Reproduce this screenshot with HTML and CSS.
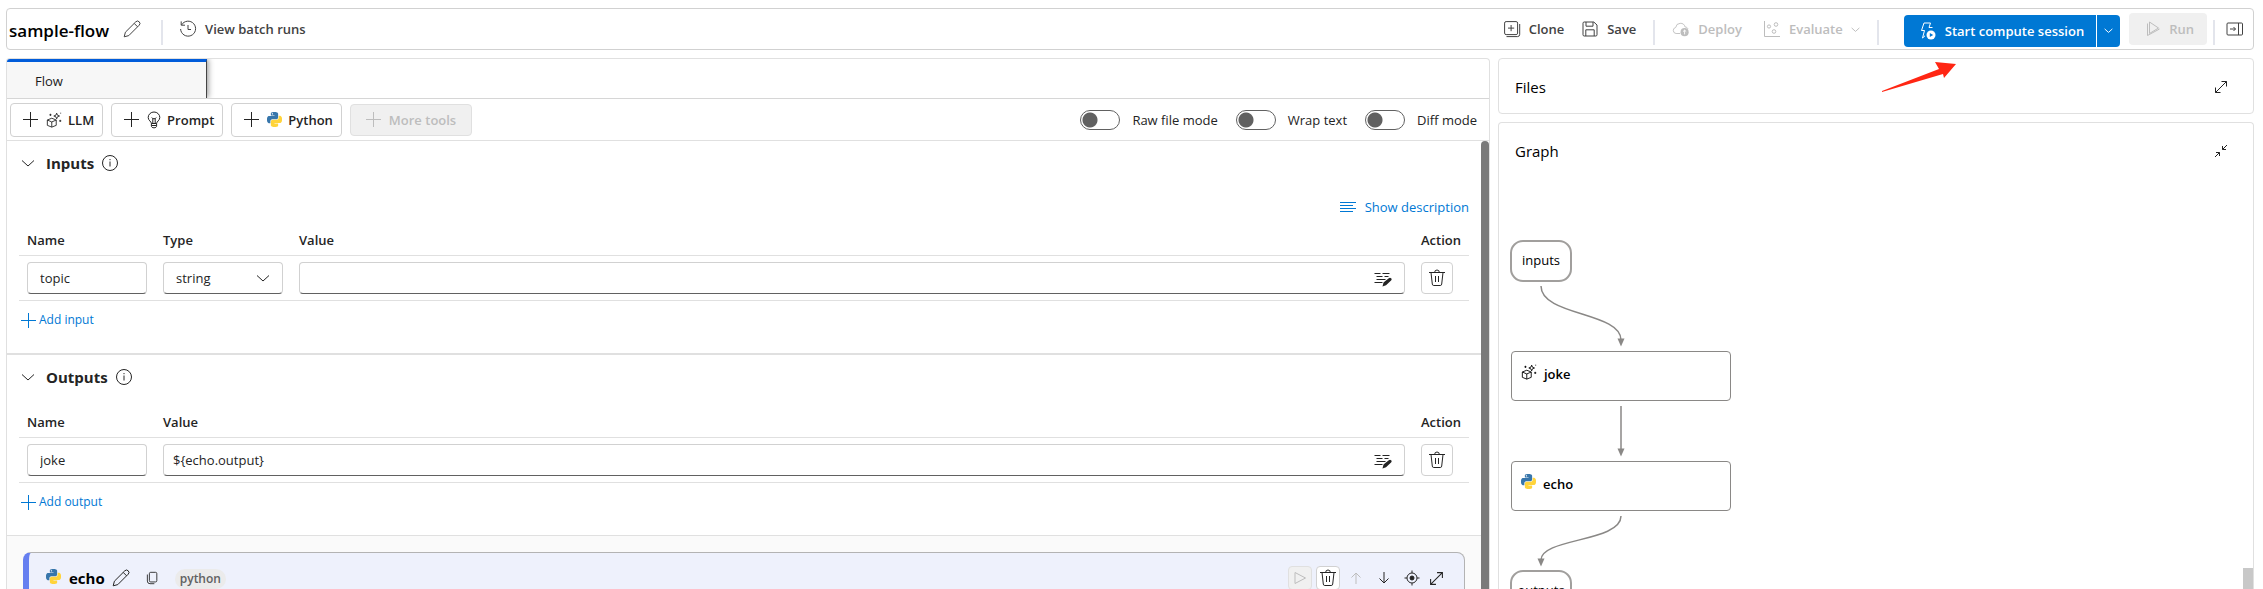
FILE: index.html
```html
<!DOCTYPE html>
<html lang="en">
<head>
<meta charset="utf-8">
<title>sample-flow</title>
<link rel="stylesheet" href="styles.css">
</head>
<body>
<svg class="sprite" aria-hidden="true">
  <symbol id="i-pencil" viewBox="0 0 18 18"><path d="M1.200 16.800l1.200-4.600L12.800 1.800a2.400 2.400 0 0 1 3.400 3.400L5.800 15.600zM11.200 3.400l3.400 3.400"/></symbol>
  <symbol id="i-history" viewBox="0 0 18 18"><path d="M2.600 4.900A7.500 7.500 0 1 1 1.600 9M2.200 1.400v3.800H6M9 5v4.500h3"/></symbol>
  <symbol id="i-clone" viewBox="0 0 18 18"><rect x="1.600" y="1.600" width="13" height="13" rx="1.500"/><path d="M8.100 5v6.200M5 8.100h6.200M3.500 16.600h11a2.200 2.200 0 0 0 2.200-2.200V4"/></symbol>
  <symbol id="i-save" viewBox="0 0 18 18"><path d="M2 3.200A1.200 1.200 0 0 1 3.200 2h9.600L16 5v9.800a1.200 1.200 0 0 1-1.200 1.200H3.200A1.200 1.200 0 0 1 2 14.800zM5 2v4.200h7V2M4.800 16V9.800h8.400V16"/></symbol>
  <symbol id="i-deploy" viewBox="0 0 20 18"><path d="M9 14H4.500a3.400 3.400 0 0 1-.4-6.700 5.300 5.300 0 0 1 10.400-.6M14.500 6.700c1.500.1 2.700.9 3.200 2"/><circle cx="14" cy="12.500" r="4.500" fill="currentColor" stroke="none"/><path d="M14 15v-4.800M12.200 12L14 10.200l1.800 1.800" stroke="#fff"/></symbol>
  <symbol id="i-evaluate" viewBox="0 0 18 18"><path d="M1.500 1v15.500H17"/><circle cx="6" cy="6.500" r="1.600"/><circle cx="13" cy="4.500" r="1.800"/><circle cx="11" cy="11.500" r="1.800"/></symbol>
  <symbol id="i-chevron" viewBox="0 0 14 14"><path d="M1 4.500l6 5.500 6-5.500"/></symbol>
  <symbol id="i-session" viewBox="0 0 18 18"><path d="M5 1h6.500L10 5.500h3.500M5 1L2.500 8.500h3L3.500 16l2.500-2.200"/><circle cx="12" cy="13" r="4.500" fill="currentColor" stroke="none"/><path d="M10.800 10.900l3.400 2.100-3.400 2.100z" fill="#0078d4" stroke="none"/></symbol>
  <symbol id="i-run" viewBox="0 0 16 16"><path d="M4.500 1v11.500L13.500 7zM2.500 2.500V14.500L14.500 8"/></symbol>
  <symbol id="i-panel" viewBox="0 0 18 14"><rect x="1" y="1" width="15.500" height="12" rx="1"/><path d="M12.500 1v12M4 7h5.500M7.500 5l2 2-2 2"/></symbol>
  <symbol id="i-plus" viewBox="0 0 15 15"><path d="M7.500 0v15M0 7.500h15"/></symbol>
  <symbol id="i-llm" viewBox="0 0 18 18"><path d="M1.500 9l5-2 5 2v6l-5 2-5-2zM1.500 9l5 2.200 5-2.200M6.500 11.200V17M12 1.300l.9 2.300 2.300.9-2.300.9-.9 2.300-.9-2.300-2.300-.9 2.300-.9zM5 2v2.400M3.800 3.200h2.400M16 8.800v2.400M14.800 10h2.400M16.500.8v1"/></symbol>
  <symbol id="i-bulb" viewBox="0 0 14 18"><path d="M4.400 12.500C4.400 10.500 1.200 9.500 1.200 6.500a5.800 5.500 0 0 1 11.600 0c0 3-3.200 4-3.200 6zM4.400 12.500v2.300c0 1.400 1 2 2.600 2s2.600-.6 2.600-2v-2.300M4.400 14.500h5.200M5.800 12V7.500M8.200 12V7.500M4.800 6.500l1 1.200h2.400l1-1.200"/></symbol>
  <symbol id="i-python" viewBox="0 0 24 24"><path fill="#3776ab" stroke="none" d="M14.250.18l.9.2.73.26.59.3.45.32.34.34.25.34.16.33.1.3.04.26.02.2-.01.13V8.5l-.05.63-.13.55-.21.46-.26.38-.3.31-.33.25-.35.19-.35.14-.33.1-.3.07-.26.04-.21.02H8.77l-.69.05-.59.14-.5.22-.41.27-.33.32-.27.35-.2.36-.15.37-.1.35-.07.32-.04.27-.02.21v3.06H3.17l-.21-.03-.28-.07-.32-.12-.35-.18-.36-.26-.36-.36-.35-.46-.32-.59-.28-.73-.21-.88-.14-1.05-.05-1.23.06-1.22.16-1.04.24-.87.32-.71.36-.57.4-.44.42-.33.42-.24.4-.16.36-.1.32-.05.24-.01h.16l.06.01h8.16v-.83H6.18l-.01-2.75-.02-.37.05-.34.11-.31.17-.28.25-.26.31-.23.38-.2.44-.18.51-.15.58-.12.64-.1.71-.06.77-.04.84-.02 1.27.05zm-6.3 1.98l-.23.33-.08.41.08.41.23.34.33.22.41.09.41-.09.33-.22.23-.34.08-.41-.08-.41-.23-.33-.33-.22-.41-.09-.41.09z"/><path fill="#ffd43b" stroke="none" d="M21.04 6.11l.28.06.32.12.35.18.36.27.36.35.35.47.32.59.28.73.21.88.14 1.04.05 1.23-.06 1.23-.16 1.04-.24.86-.32.71-.36.57-.4.45-.42.33-.42.24-.4.16-.36.09-.32.05-.24.02-.16-.01h-8.22v.82h5.84l.01 2.76.02.36-.05.34-.11.31-.17.29-.25.25-.31.24-.38.2-.44.17-.51.15-.58.13-.64.09-.71.07-.77.04-.84.01-1.27-.04-1.07-.14-.9-.2-.73-.25-.59-.3-.45-.33-.34-.34-.25-.34-.16-.33-.1-.3-.04-.25-.02-.2.01-.13v-5.34l.05-.64.13-.54.21-.46.26-.38.3-.32.33-.24.35-.2.35-.14.33-.1.3-.06.26-.04.21-.02.13-.01h5.84l.69-.05.59-.14.5-.21.41-.28.33-.32.27-.35.2-.36.15-.36.1-.35.07-.32.04-.28.02-.21V6.07z"/></symbol>
  <symbol id="i-info" viewBox="0 0 18 18"><circle cx="9" cy="9" r="7.500"/><path d="M9 7.500v5M9 5v1.200"/></symbol>
  <symbol id="i-lines" viewBox="0 0 16 12"><path d="M0 1.500h16M0 4.500h13M0 7.500h16M0 10.500h13"/></symbol>
  <symbol id="i-edit" viewBox="0 0 18 16"><path d="M.5 2.500h6M8.500 2.500h7M2.500 5.500h6M10.500 5.500h4M2.500 8.500h9M.5 11.500h8"/><path d="M8.500 15.500l1-4L14.800 7.200a1.600 1.600 0 0 1 2.300 2.300L12 14.300z" fill="currentColor" stroke="none"/></symbol>
  <symbol id="i-trash" viewBox="0 0 18 18"><path d="M1 3.500h16M6.700 3.300a2.300 2.300 0 0 1 4.600 0M3 3.500l1.300 11.600a1.500 1.500 0 0 0 1.500 1.400h6.400a1.500 1.500 0 0 0 1.500-1.400L15 3.500M7.500 7v6M10.500 7v6"/></symbol>
  <symbol id="i-copy" viewBox="0 0 16 16"><rect x="5" y="1.500" width="8.500" height="11" rx="1.500"/><path d="M2.700 4v7.500a3 3 0 0 0 3 3h5"/></symbol>
  <symbol id="i-play" viewBox="0 0 14 14"><path d="M2 1.500v11L12.500 7z"/></symbol>
  <symbol id="i-up" viewBox="0 0 14 14"><path d="M7 13V2M2.500 6.500L7 2l4.500 4.500"/></symbol>
  <symbol id="i-down" viewBox="0 0 14 14"><path d="M7 1v11M2.500 7.500L7 12l4.500-4.500"/></symbol>
  <symbol id="i-target" viewBox="0 0 16 16"><circle cx="8" cy="8" r="5"/><circle cx="8" cy="8" r="2" fill="currentColor"/><path d="M8 .5V3M8 13v2.500M.5 8H3M13 8h2.500"/></symbol>
  <symbol id="i-expand" viewBox="0 0 14 14"><path d="M1.500 12.500l11-11M7.500 1.500h5v5M1.500 7.500v5h5"/></symbol>
  <symbol id="i-collapse" viewBox="0 0 14 14"><path d="M13 1L8.500 5.500M8.500 2v3.500H12M1 13l4.500-4.500M2 8.500h3.500V12"/></symbol>
</svg>

<div class="app">
  <header class="topbar">
    <h1 class="title">sample-flow</h1>
    <button class="cmd cmd-edit" aria-label="Rename flow"><svg class="icon-18"><use href="#i-pencil"/></svg></button>
    <span class="divider"></span>
    <button class="cmd cmd-history"><svg class="icon-18"><use href="#i-history"/></svg>View batch runs</button>
    <div class="actions">
      <button class="cmd"><svg class="icon-18"><use href="#i-clone"/></svg>Clone</button>
      <button class="cmd"><svg class="icon-18"><use href="#i-save"/></svg>Save</button>
      <span class="divider"></span>
      <button class="cmd" disabled><svg class="icon-18"><use href="#i-deploy"/></svg>Deploy</button>
      <button class="cmd cmd-evaluate" disabled><svg class="icon-18"><use href="#i-evaluate"/></svg>Evaluate<svg class="icon-9"><use href="#i-chevron"/></svg></button>
      <span class="divider"></span>
      <div class="session">
        <button class="session-main"><svg class="icon-18"><use href="#i-session"/></svg>Start compute session</button>
        <button class="session-more" aria-label="More session options"><svg class="icon-9"><use href="#i-chevron"/></svg></button>
        <svg class="pointer" viewBox="0 0 74 32"><path d="M0 30l57-22-4-7 21 2-12 14-1-4L0 31z"/></svg>
      </div>
      <button class="run" disabled><svg class="icon-16"><use href="#i-run"/></svg>Run</button>
      <span class="divider divider-last"></span>
      <button class="cmd cmd-panel" aria-label="Toggle side panel"><svg class="icon-panel"><use href="#i-panel"/></svg></button>
    </div>
  </header>

  <div class="columns">
    <main class="editor">
      <div class="tabs" role="tablist"><button class="tab" role="tab" aria-selected="true">Flow</button></div>
      <div class="toolbar">
        <button class="tool"><svg class="icon-15"><use href="#i-plus"/></svg><svg class="icon-16"><use href="#i-llm"/></svg>LLM</button>
        <button class="tool"><svg class="icon-15"><use href="#i-plus"/></svg><svg class="icon-bulb"><use href="#i-bulb"/></svg>Prompt</button>
        <button class="tool"><svg class="icon-15"><use href="#i-plus"/></svg><svg class="icon-15"><use href="#i-python"/></svg>Python</button>
        <button class="tool" disabled><svg class="icon-15"><use href="#i-plus"/></svg>More tools</button>
        <div class="switches">
          <label class="switch"><input type="checkbox" role="switch">Raw file mode</label>
          <label class="switch"><input type="checkbox" role="switch">Wrap text</label>
          <label class="switch"><input type="checkbox" role="switch">Diff mode</label>
        </div>
      </div>

      <div class="scroller">
        <div class="content">
          <section class="section">
            <h2 class="heading"><svg class="icon-14"><use href="#i-chevron"/></svg>Inputs<svg class="icon-18"><use href="#i-info"/></svg></h2>
            <div class="describe"><button class="link"><svg class="icon-lines"><use href="#i-lines"/></svg>Show description</button></div>
            <table class="grid">
              <thead><tr><th class="col-name">Name</th><th class="col-name">Type</th><th>Value</th><th class="col-action">Action</th></tr></thead>
              <tbody><tr>
                <td><input class="field" type="text" value="topic" aria-label="Input name"></td>
                <td><div class="overlay"><select class="field" aria-label="Input type"><option>string</option></select><svg class="icon-14"><use href="#i-chevron"/></svg></div></td>
                <td><div class="overlay"><input class="field field-value" type="text" aria-label="Input value"><svg class="icon-edit"><use href="#i-edit"/></svg></div></td>
                <td><button class="delete" aria-label="Delete input"><svg class="icon-18"><use href="#i-trash"/></svg></button></td>
              </tr></tbody>
            </table>
            <button class="link link-add"><svg class="icon-15"><use href="#i-plus"/></svg>Add input</button>
          </section>

          <section class="section section-outputs">
            <h2 class="heading"><svg class="icon-14"><use href="#i-chevron"/></svg>Outputs<svg class="icon-18"><use href="#i-info"/></svg></h2>
            <table class="grid grid-outputs">
              <thead><tr><th class="col-name">Name</th><th>Value</th><th class="col-action">Action</th></tr></thead>
              <tbody><tr>
                <td><input class="field" type="text" value="joke" aria-label="Output name"></td>
                <td><div class="overlay"><input class="field field-value" type="text" value="${echo.output}" aria-label="Output value"><svg class="icon-edit"><use href="#i-edit"/></svg></div></td>
                <td><button class="delete" aria-label="Delete output"><svg class="icon-18"><use href="#i-trash"/></svg></button></td>
              </tr></tbody>
            </table>
            <button class="link link-add"><svg class="icon-15"><use href="#i-plus"/></svg>Add output</button>
          </section>

          <div class="nodes">
            <article class="node">
              <svg class="icon-15"><use href="#i-python"/></svg>
              <h3 class="node-name">echo</h3>
              <button class="mini" aria-label="Rename node"><svg class="icon-18"><use href="#i-pencil"/></svg></button>
              <button class="mini mini-copy" aria-label="Copy node name"><svg class="icon-14"><use href="#i-copy"/></svg></button>
              <span class="pill">python</span>
              <div class="node-actions">
                <button class="mini mini-boxed" disabled aria-label="Run node"><svg class="icon-14"><use href="#i-play"/></svg></button>
                <button class="mini mini-boxed" aria-label="Delete node"><svg class="icon-18"><use href="#i-trash"/></svg></button>
                <button class="mini" disabled aria-label="Move up"><svg class="icon-14"><use href="#i-up"/></svg></button>
                <button class="mini" aria-label="Move down"><svg class="icon-14"><use href="#i-down"/></svg></button>
                <button class="mini" aria-label="Locate in graph"><svg class="icon-16"><use href="#i-target"/></svg></button>
                <button class="mini mini-expand" aria-label="Expand node"><svg class="icon-15"><use href="#i-expand"/></svg></button>
              </div>
            </article>
          </div>
        </div>
        <div class="scrollbar"></div>
      </div>
    </main>

    <aside class="side">
      <section class="card card-files"><h2 class="card-title">Files</h2><button class="mini" aria-label="Expand files"><svg class="icon-14"><use href="#i-expand"/></svg></button></section>
      <section class="card card-graph">
        <div class="card-head"><h2 class="card-title">Graph</h2><button class="mini" aria-label="Collapse graph"><svg class="icon-14"><use href="#i-collapse"/></svg></button></div>
        <div class="canvas">
          <svg class="edges" viewBox="0 0 300 420">
            <path d="M42 105C42 135 122 131 122 159M122 225v44M122 335C122 361 42 357 42 379"/>
            <path class="tip" d="M118.500 157.500h7l-3.500 8zM118.500 267.500h7l-3.500 8zM38.500 377.500h7l-3.500 8z"/>
          </svg>
          <div class="port port-inputs">inputs</div>
          <div class="box box-joke"><svg class="icon-16"><use href="#i-llm"/></svg>joke</div>
          <div class="box box-echo"><svg class="icon-15"><use href="#i-python"/></svg>echo</div>
          <div class="port port-outputs">outputs</div>
        </div>
        <div class="thumb"></div>
      </section>
    </aside>
  </div>
</div>
</body>
</html>
```

FILE: styles.css
```css
* { box-sizing: border-box; }

body {
  margin: 0;
  background: #fff;
  color: #242424;
  font: 13px/20px "Open Sans", "Noto Sans", sans-serif;
  overflow: hidden;
}

h1, h2, h3 { margin: 0; }

button, input, select { font: inherit; color: inherit; }

button {
  display: flex;
  align-items: center;
  padding: 0;
  border: 0;
  background: none;
  white-space: nowrap;
}

svg { flex: none; fill: none; stroke: currentColor; stroke-width: 1; }

.sprite { position: absolute; width: 0; height: 0; }
.icon-9 { width: 9px; height: 9px; stroke-width: 1.5; }
.icon-14 { width: 14px; height: 14px; }
.icon-15 { width: 15px; height: 15px; }
.icon-16 { width: 16px; height: 16px; }
.icon-18 { width: 18px; height: 18px; }
.icon-bulb { width: 14px; height: 18px; }
.icon-panel { width: 18px; height: 14px; }
.icon-lines { width: 16px; height: 12px; }
.icon-edit { width: 18px; height: 16px; }

.app {
  display: flex;
  flex-direction: column;
  gap: 8px;
  height: 100vh;
  padding: 8px 9px 0 6px;
  overflow: hidden;
}

/* Top bar */
.topbar {
  display: flex;
  align-items: center;
  height: 42px;
  padding: 0 9px 0 2px;
  border: 1px solid #d1d1d1;
  border-radius: 4px;
}
.title { padding-top: 4px; color: #000; font-size: 17px; line-height: 24px; font-weight: 600; }
.divider { width: 2px; height: 25px; margin-top: 6px; background: #e3e5ec; }
.cmd { gap: 8px; color: #424242; font-weight: 600; }
.cmd:disabled, .run:disabled { color: #bdbdbd; }
.cmd-edit { margin: 0 20px 0 14px; }
.cmd-history { margin-left: 16px; }
.cmd-evaluate { margin-left: 4px; }
.actions { display: flex; align-items: center; gap: 17px; margin-left: auto; }
.session { position: relative; display: flex; height: 32px; margin: 3px -8px 0 8px; color: #fff; font-weight: 600; }
.session-main { gap: 8px; padding: 0 12px 0 15px; border-radius: 4px 0 0 4px; background: #0078d4; }
.session-more { width: 24px; justify-content: center; border-left: 1px solid #fff; border-radius: 0 4px 4px 0; background: #0078d4; }
.pointer { position: absolute; top: 46px; left: -22px; z-index: 1; width: 74px; height: 32px; fill: #ff2613; stroke: none; }
.run { gap: 8px; height: 32px; padding: 0 13px 0 16px; border-radius: 4px; background: #f0f0f0; font-weight: 600; }
.divider-last { margin-left: -11px; margin-right: -6px; }

/* Columns */
.columns { display: grid; grid-template-columns: minmax(0, 1484fr) minmax(0, 756fr); gap: 8px; flex: 1; min-height: 0; }

.editor { display: flex; flex-direction: column; min-height: 0; border: 1px solid #e0e0e0; border-bottom: 0; border-radius: 4px 4px 0 0; overflow: hidden; }
.tabs { display: flex; flex: none; height: 40px; border-bottom: 1px solid #d6d6d6; overflow: hidden; }
.tab {
  width: 200px;
  padding: 2px 28px 0;
  border-top: 3px solid #015cda;
  border-right: 1px solid #444;
  background: #f7f7f7;
  box-shadow: 1px 0 6px #8c8c8c;
  color: #1b1b1b;
}
.toolbar { display: flex; flex: none; align-items: center; gap: 8px; height: 42px; padding: 0 12px 0 3px; border-bottom: 1px solid #e0e0e0; }
.tool { gap: 6px; height: 34px; padding: 0 8px 0 12px; border: 1px solid #d1d1d1; border-radius: 4px; font-weight: 600; }
.tool > svg:first-child { margin-right: 2px; }
.tool:disabled { height: 32px; padding: 0 15px; border-color: #e0e0e0; background: #f0f0f0; color: #bdbdbd; }
.switches { display: flex; gap: 18px; margin-left: auto; }
.switch { display: flex; align-items: center; gap: 12px; }
.switch input {
  appearance: none;
  width: 40px;
  height: 20px;
  margin: 0;
  border: 1px solid #616161;
  border-radius: 10px;
  background: radial-gradient(circle at 9px 9px, #616161 7px, transparent 8px);
}

.scroller { display: flex; flex: 1; min-height: 0; overflow: hidden; }
.content { flex: 1; min-width: 0; }
.scrollbar { width: 8px; border-radius: 4px 4px 0 0; background: #7a7a7a; }

.section { padding: 0 12px 16px; border-bottom: 2px solid #e0e0e0; }
.section-outputs { border-bottom-width: 1px; }
.heading { display: flex; align-items: center; gap: 7px; height: 44px; padding-left: 2px; font-size: 15px; line-height: 20px; font-weight: 700; }
.heading > svg:first-child { margin-right: 4px; }
.describe { display: flex; justify-content: flex-end; height: 42px; padding-top: 2px; }
.link { gap: 9px; color: #0078d4; }
.link-add { gap: 3px; height: 36px; padding: 2px 0 0 2px; font-size: 12px; }

.grid { width: 100%; border-collapse: separate; border-spacing: 0; table-layout: fixed; }
.grid-outputs { margin-top: 10px; }
.grid th { height: 29px; padding: 0 8px 2px; border-bottom: 1px solid #e0e0e0; text-align: left; font-weight: 600; }
.grid td { height: 45px; padding: 0 8px; border-bottom: 1px solid #e0e0e0; }
.col-name { width: 136px; }
.col-action { width: 56px; }
.field {
  appearance: none;
  display: block;
  width: 100%;
  height: 32px;
  padding: 0 12px;
  border: 1px solid #d1d1d1;
  border-bottom-color: #616161;
  border-radius: 4px;
  background: #fff;
}
.field-value { padding: 0 40px 0 9px; }
.overlay { position: relative; }
.overlay svg { position: absolute; right: 13px; top: 9px; pointer-events: none; }
.delete { width: 32px; height: 32px; justify-content: center; border: 1px solid #d1d1d1; border-radius: 4px; }

.nodes { padding: 16px; background: #fafafa; }
.node {
  display: flex;
  align-items: flex-start;
  height: 80px;
  padding: 13px 16px 0 17px;
  border: 1px solid #b3b3b3;
  border-left: 6px solid #667ff0;
  border-radius: 8px;
  background: #eef1fc;
}
.node > svg { margin-top: 3px; }
.node-name { margin: 2px 7px 0 8px; color: #000; font-size: 15px; line-height: 20px; font-weight: 700; }
.mini { width: 24px; height: 24px; flex: none; justify-content: center; }
.mini:disabled { color: #bdbdbd; }
.node > .mini { width: 18px; }
.node > .mini-copy { margin: 0 14px 0 13px; }
.mini-boxed { border: 1px solid #d1d1d1; border-radius: 4px; background: #fff; }
.mini-boxed:disabled { border-color: #e0e0e0; background: #f0f0f0; }
.mini-expand { margin-left: -4px; }
.pill { margin-top: 3px; padding: 0 5px; border-radius: 10px; background: #ebebeb; color: #616161; font-size: 12px; line-height: 20px; font-weight: 600; }
.node-actions { display: flex; gap: 4px; margin-left: auto; }

/* Side cards */
.side { display: flex; flex-direction: column; gap: 8px; min-height: 0; }
.card { position: relative; border: 1px solid #e0e0e0; border-radius: 4px; }
.card-files, .card-head { display: flex; align-items: center; justify-content: space-between; padding: 0 20px 0 16px; }
.card-files { height: 56px; padding-top: 2px; }
.card-graph { flex: 1; min-height: 0; overflow: hidden; border-bottom: 0; border-radius: 4px 4px 0 0; }
.card-head { height: 58px; padding-bottom: 2px; }
.card-title { color: #000; font-size: 15px; line-height: 20px; font-weight: 400; }
.canvas { position: relative; height: 420px; color: #000; }
.edges { position: absolute; top: 0; left: 0; width: 300px; height: 420px; stroke: #8a8886; stroke-width: 1.5; }
.tip { fill: #8a8886; stroke-width: 0; }
.port { position: absolute; left: 11px; width: 62px; height: 42px; border: 2px solid #a19f9d; border-radius: 13px; text-align: center; line-height: 36px; }
.port-inputs { top: 59px; }
.port-outputs { top: 389px; }
.box { position: absolute; left: 12px; display: flex; gap: 7px; width: 220px; height: 50px; padding: 12px 9px; border: 1px solid #8a8886; border-radius: 4px; font-weight: 600; line-height: 20px; }
.box-joke { top: 170px; }
.box-echo { top: 280px; }
.thumb { position: absolute; right: 0; bottom: 0; width: 10px; height: 21px; background: #c8c8c8; }
```
